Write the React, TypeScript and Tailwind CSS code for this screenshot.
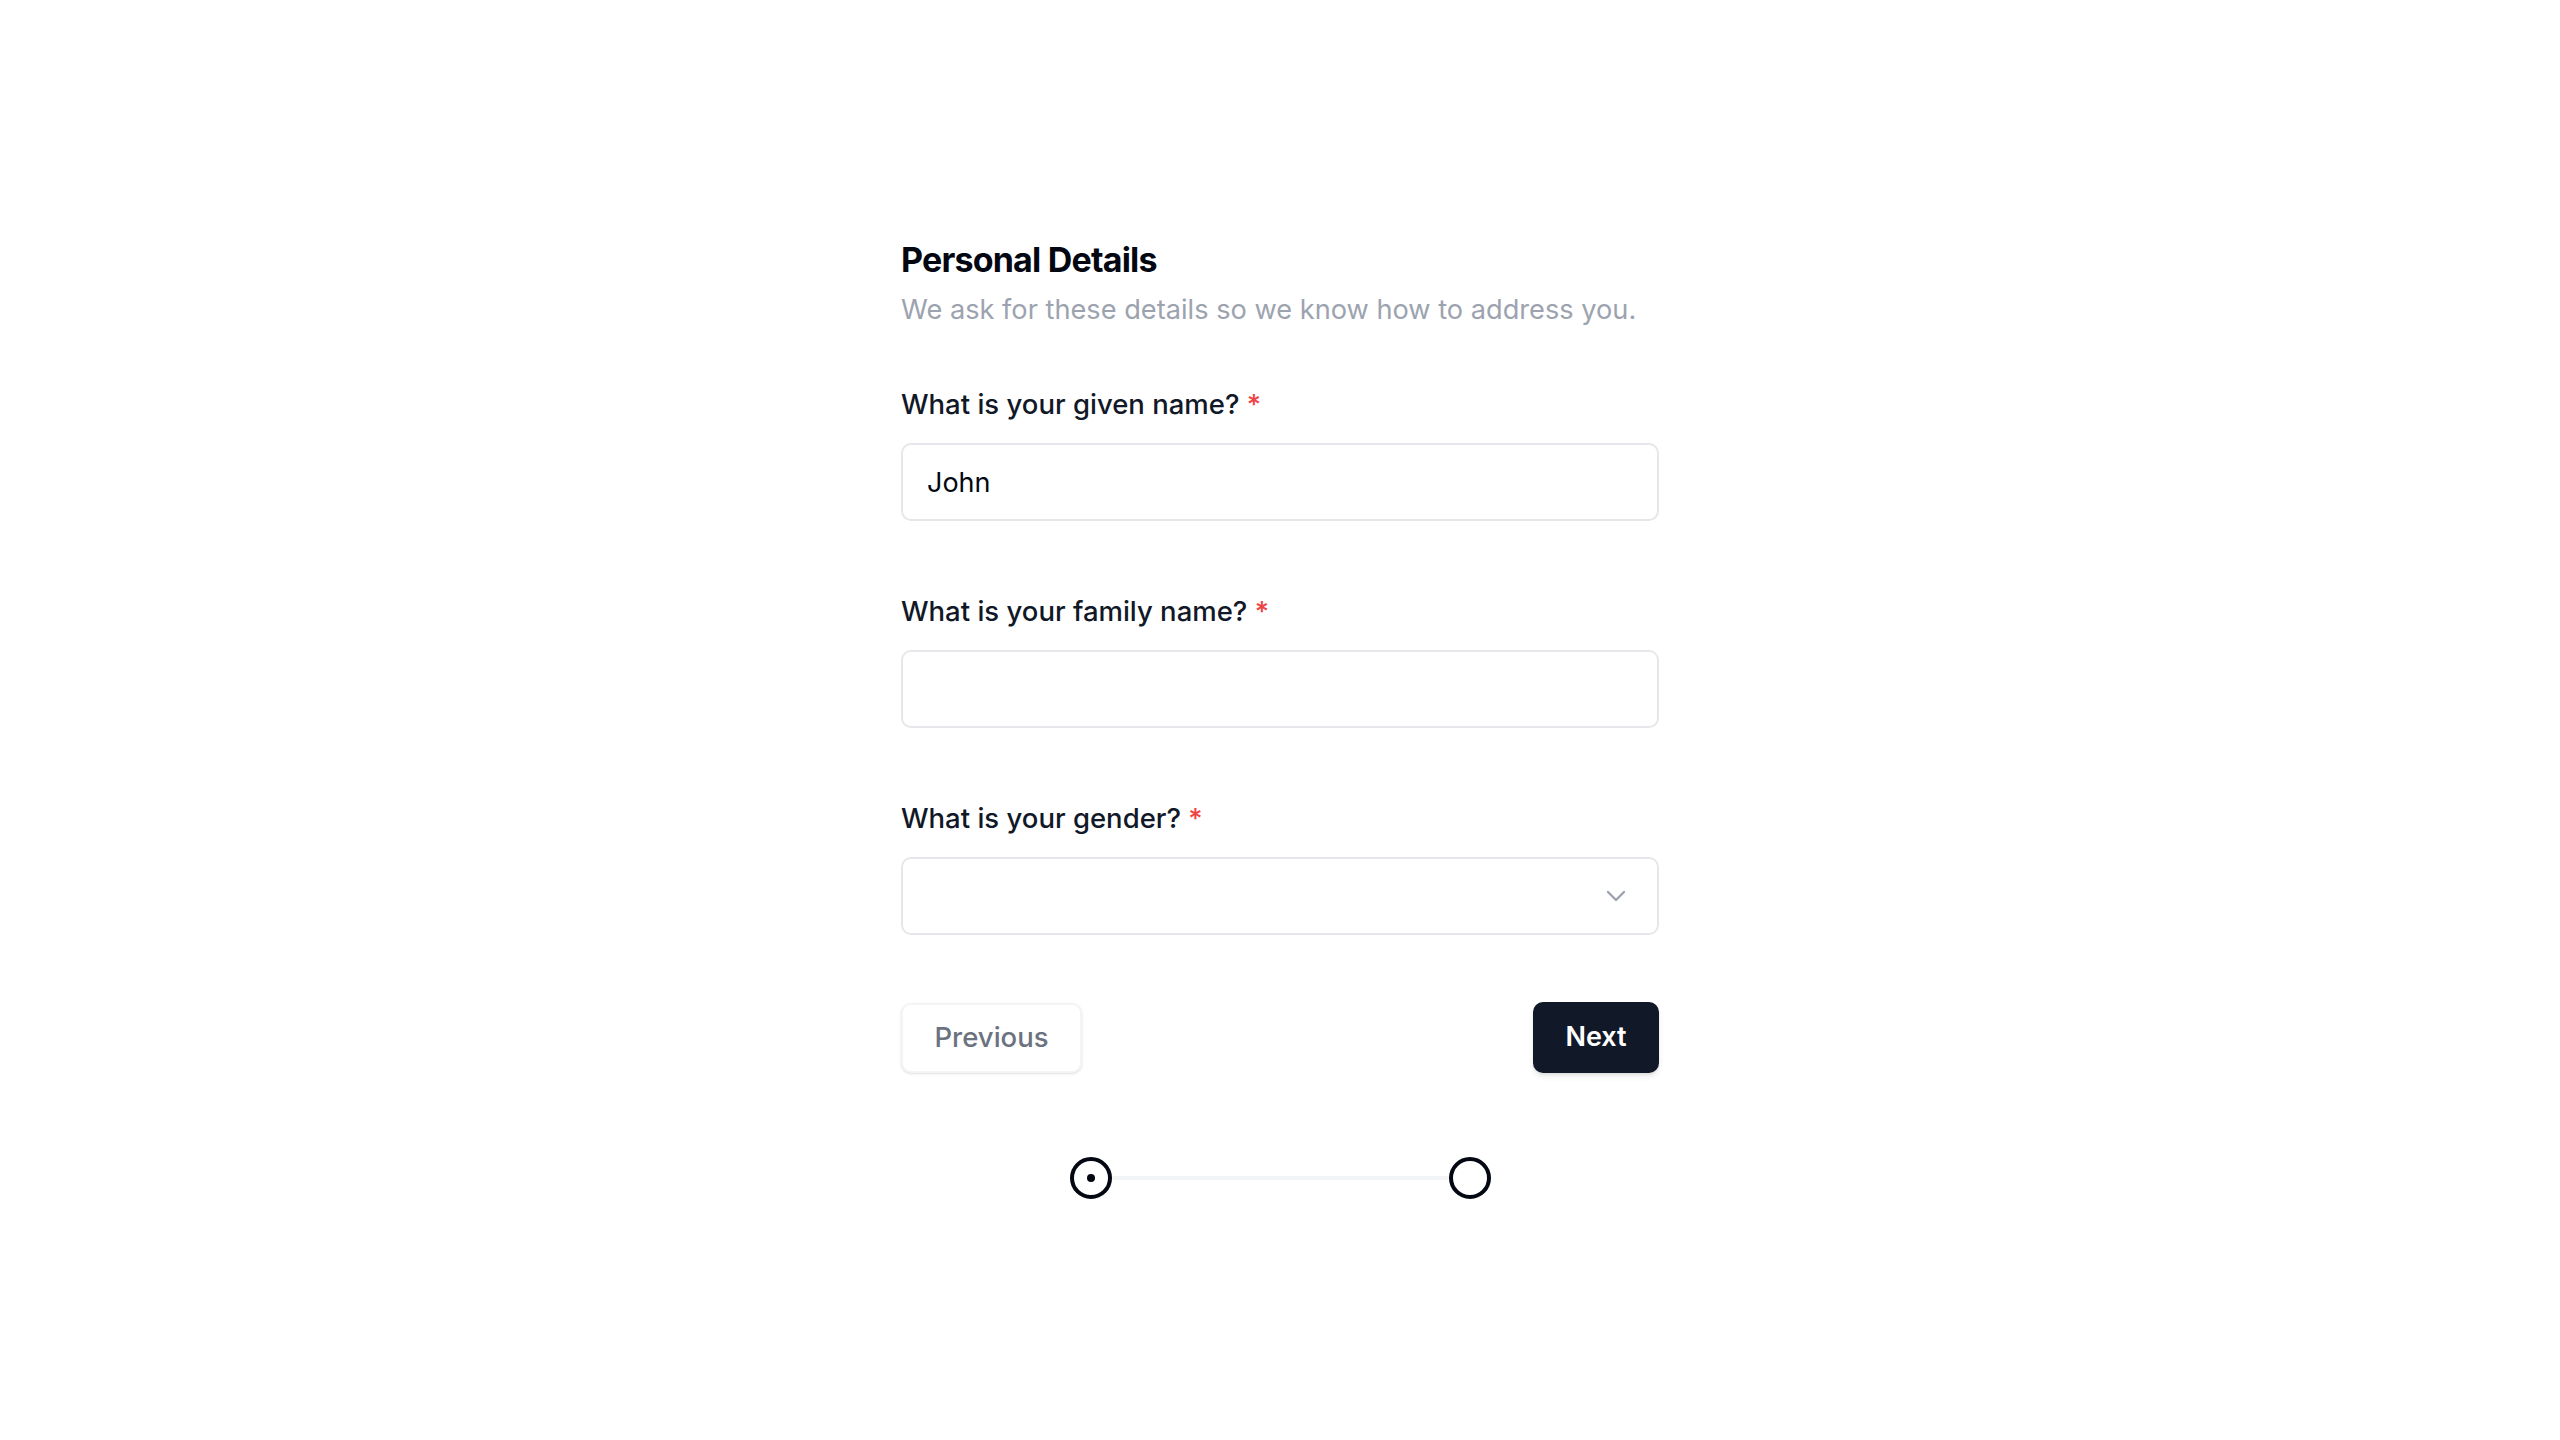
import React from "react";

function Label({ children }: { children: React.ReactNode }) {
  return (
    <label className="block text-[27.5px] leading-[38px] font-medium text-[#111827]">
      {children} <span className="text-[#ef4444]">*</span>
    </label>
  );
}

export default function App() {
  return (
    <div
      className="min-h-screen w-full bg-white flex justify-center pt-[240px]"
      style={{ fontFamily: "Inter, 'Noto Sans', sans-serif" }}
    >
      <div className="w-[758px] flex flex-col">
        <h1 className="text-[34px] leading-[40px] font-bold text-[#030712] tracking-[-0.8px]">
          Personal Details
        </h1>
        <p className="mt-[14px] text-[27.2px] leading-[32px] text-[#9ca3af]">
          We ask for these details so we know how to address you.
        </p>

        <div className="mt-[59px] flex flex-col">
          <Label>What is your given name?</Label>
          <div className="mt-[20px] h-[78px] rounded-[10px] border-2 border-[#e5e7eb] bg-white flex items-center px-[24px] pt-[3px]">
            <span className="text-[27px] text-[#030712]">John</span>
          </div>
        </div>

        <div className="mt-[71px] flex flex-col">
          <Label>What is your family name?</Label>
          <div className="mt-[20px] h-[78px] rounded-[10px] border-2 border-[#e5e7eb] bg-white" />
        </div>

        <div className="mt-[71px] flex flex-col">
          <Label>What is your gender?</Label>
          <div className="mt-[20px] h-[78px] rounded-[10px] border-2 border-[#e5e7eb] bg-white flex items-center justify-end pr-[31px]">
            <svg width="20" height="12" viewBox="0 0 20 12" fill="none">
              <path d="M2 2 L10 10 L18 2" stroke="#9ca3af" strokeWidth="2.4" strokeLinecap="round" strokeLinejoin="round" />
            </svg>
          </div>
        </div>

        <div className="mt-[67px] flex items-center justify-between">
          <button className="h-[70px] w-[181px] rounded-[10px] border-2 border-[#f3f4f6] bg-white shadow-sm text-[27.5px] font-medium text-[#6b7280]">
            Previous
          </button>
          <button className="h-[71px] w-[126px] rounded-[10px] bg-[#111827] shadow-md text-[27px] font-semibold text-white">
            Next
          </button>
        </div>

        <div className="mt-[84px] flex items-center justify-center">
          <div className="flex items-center">
            <div className="w-[42px] h-[42px] rounded-full border-4 border-[#030712] flex items-center justify-center">
              <div className="w-[8px] h-[8px] rounded-full bg-[#030712]" />
            </div>
            <div className="w-[337px] h-[4px] bg-[#f3f4f6]" />
            <div className="w-[42px] h-[42px] rounded-full border-4 border-[#030712]" />
          </div>
        </div>
      </div>
    </div>
  );
}
